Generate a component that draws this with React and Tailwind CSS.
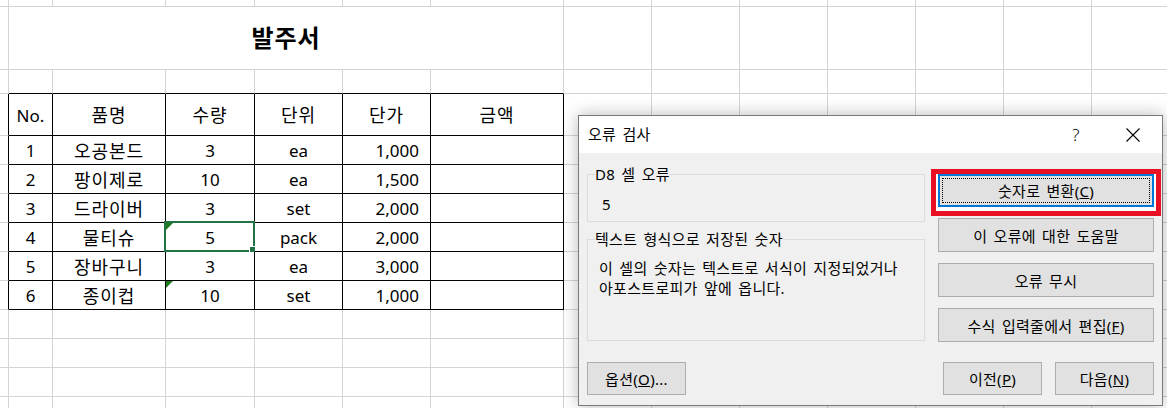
import React from "react";

const header = ["No.", "품명", "수량", "단위", "단가", "금액"];
const items = [
  ["1", "오공본드", "3", "ea", "1,000", ""],
  ["2", "팡이제로", "10", "ea", "1,500", ""],
  ["3", "드라이버", "3", "set", "2,000", ""],
  ["4", "물티슈", "5", "pack", "2,000", ""],
  ["5", "장바구니", "3", "ea", "3,000", ""],
  ["6", "종이컵", "10", "set", "1,000", ""],
];

const ROWS = 14;
const COLS = 14;

function ErrorMark() {
  return (
    <svg className="absolute left-0 top-0" width="7" height="7" viewBox="0 0 7 7">
      <polygon points="0,0 7,0 0,7" fill="#1e7b1e" />
    </svg>
  );
}

function Cell({ r, c }) {
  const inTable = r >= 3 && r <= 9;
  const rightBlack = inTable && c <= 6;
  const bottomBlack = c >= 1 && c <= 6 && r >= 2 && r <= 9;
  let text = "";
  if (inTable && c >= 1 && c <= 6) {
    text = r === 3 ? header[c - 1] : items[r - 4][c - 1];
  }
  const korean = /[가-힣]/.test(text);
  const rightAlign = c === 5 && r >= 4 && r <= 9;
  const selected = r === 7 && c === 3;
  const flagged = (r === 7 || r === 9) && c === 3;

  return (
    <div
      className={
        "relative flex items-center border-r border-b " +
        (rightBlack ? "border-r-black " : "border-r-[#d4d4d4] ") +
        (bottomBlack ? "border-b-black " : "border-b-[#d4d4d4] ") +
        (rightAlign ? "justify-end pr-[11px] " : "justify-center ") +
        (korean ? "text-[18px] tracking-[1px]" : "text-[17px]")
      }
    >
      {text && <span className="leading-none pt-[1px]">{text}</span>}
      {flagged && <ErrorMark />}
      {selected && (
        <div className="absolute -left-[2px] -top-[2px] -right-[1px] -bottom-[1px] border-2 border-[#217346]">
          <div className="absolute -right-[3px] -bottom-[3px] w-[7px] h-[7px] bg-[#217346] border border-white" />
        </div>
      )}
    </div>
  );
}

function Sheet() {
  const cells = [];
  for (let r = 0; r < ROWS; r++) {
    for (let c = 0; c < COLS; c++) {
      if (r === 1 && c >= 1 && c <= 6) {
        if (c === 1) {
          cells.push(
            <div
              key={`${r}-${c}`}
              className="col-span-6 flex items-center justify-center border-r border-b border-[#d4d4d4] text-[24px] font-bold tracking-[1px]"
            >
              <span className="leading-none">발주서</span>
            </div>
          );
        }
        continue;
      }
      cells.push(<Cell key={`${r}-${c}`} r={r} c={c} />);
    }
  }
  return (
    <div className="grid w-[1180px] grid-cols-[9px_44px_113px_89px_88px_88px_133px_repeat(7,88px)] grid-rows-[7px_63px_24px_42px_repeat(10,29px)] text-black">
      {cells}
    </div>
  );
}

function Btn({ children, className = "" }) {
  return (
    <div
      className={
        "flex items-center justify-center bg-[#e1e1e1] border border-[#adadad] text-[15px] leading-none text-black " +
        className
      }
    >
      <span className="pt-[2px]">{children}</span>
    </div>
  );
}

function Dialog() {
  return (
    <div className="absolute left-[578px] top-[115px] w-[585px] h-[291px] flex flex-col border border-[#7a7a7a] bg-[#f0f0f0] shadow-[0_0_16px_rgba(0,0,0,0.28)] text-[15px] tracking-[0.3px] [word-spacing:2px] text-black">
      <div className="h-[37px] bg-white flex items-center">
        <span className="pl-[9px] leading-none flex-1">오류 검사</span>
        <div className="w-[56px] h-full flex items-center justify-center">
          <span className="leading-none text-[17px] font-light">?</span>
        </div>
        <div className="w-[58px] h-full flex items-center justify-center">
          <svg width="14" height="14" viewBox="0 0 14 14">
            <path d="M0.5 0.5 L13.5 13.5 M13.5 0.5 L0.5 13.5" stroke="#000" strokeWidth="1.1" fill="none" />
          </svg>
        </div>
      </div>

      <div className="flex-1 grid grid-cols-[338px_216px] justify-between px-[8px]">
        <div className="flex flex-col">
          <fieldset className="mt-[11px] h-[58px] border border-[#dcdcdc]">
            <legend className="ml-[7px] leading-[20px]">D8 셀 오류</legend>
            <div className="pl-[14px] pt-[10px] leading-[20px]">5</div>
          </fieldset>
          <fieldset className="mt-[7px] h-[112px] border border-[#dcdcdc]">
            <legend className="ml-[7px] leading-[20px]">텍스트 형식으로 저장된 숫자</legend>
            <div className="pl-[11px] pt-[9px] leading-[20px]">
              이 셀의 숫자는 텍스트로 서식이 지정되었거나
              <br />
              아포스트로피가 앞에 옵니다.
            </div>
          </fieldset>
          <Btn className="mt-[21px] w-[99px] h-[33px]">
            옵션(<span className="underline">O</span>)...
          </Btn>
        </div>

        <div className="flex flex-col">
          <div className="relative mt-[21px] h-[33px] flex items-center justify-center bg-[#e1e1e1] border-2 border-[#0078d7] shadow-[0_2px_0_2px_#ffffff,0_2px_0_7px_#e81123]">
            <div className="absolute inset-[2px] border border-dotted border-black" />
            <span className="pt-[2px] leading-none">
              숫자로 변환(<span className="underline">C</span>)
            </span>
          </div>
          <Btn className="mt-[11px] h-[34px]">이 오류에 대한 도움말</Btn>
          <Btn className="mt-[11px] h-[34px]">오류 무시</Btn>
          <Btn className="mt-[11px] h-[34px]">
            수식 입력줄에서 편집(<span className="underline">F</span>)
          </Btn>
          <div className="mt-[20px] flex justify-end gap-[13px]">
            <Btn className="w-[99px] h-[33px]">
              이전(<span className="underline">P</span>)
            </Btn>
            <Btn className="w-[99px] h-[33px]">
              다음(<span className="underline">N</span>)
            </Btn>
          </div>
        </div>
      </div>
    </div>
  );
}

export default function App() {
  return (
    <div className="relative w-[1167px] h-[408px] overflow-hidden bg-white font-['Noto_Sans','Noto_Sans_CJK_KR',sans-serif]">
      <Sheet />
      <Dialog />
    </div>
  );
}
